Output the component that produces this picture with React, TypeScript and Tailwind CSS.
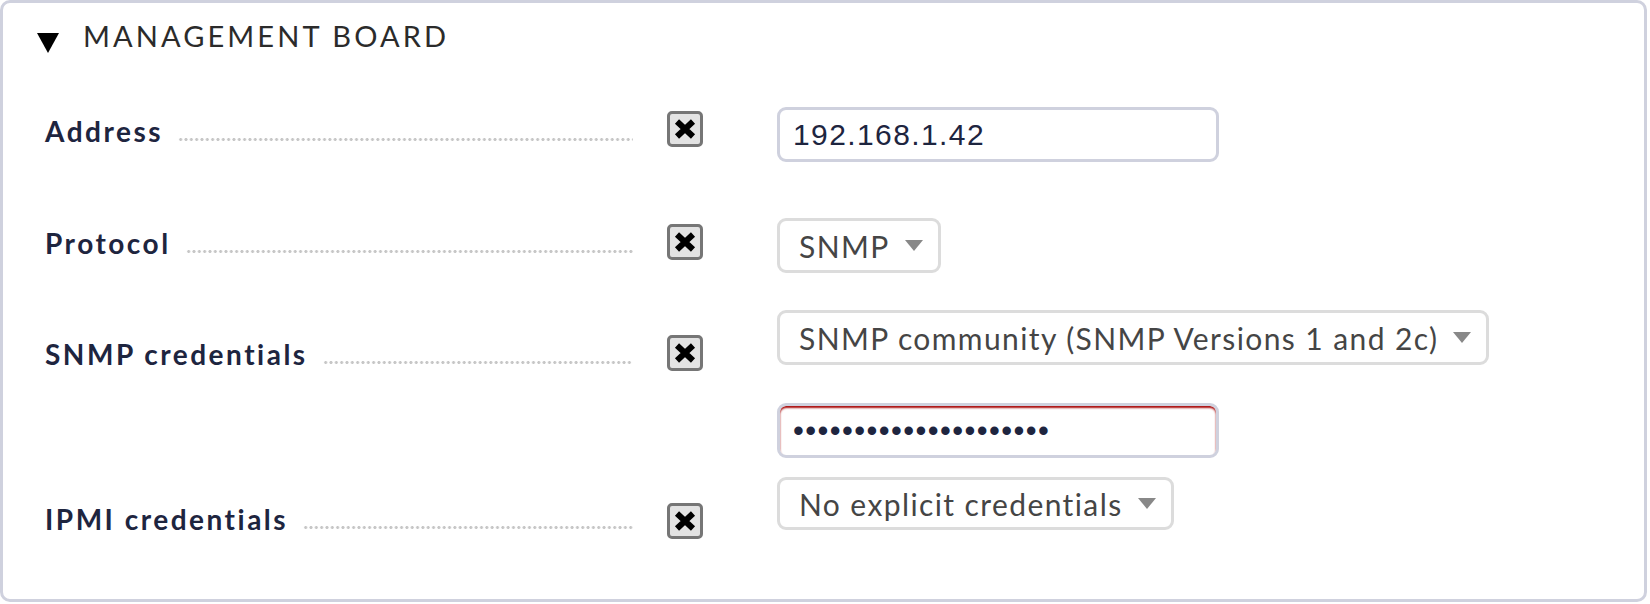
import React from "react";

const lato = "font-['Lato',_'Noto_Sans',_sans-serif]";
const arial = "font-['Liberation_Sans',_Arial,_sans-serif]";

function XBox({ mt }: { mt: string }) {
  return (
    <div
      className={`ml-[34px] flex h-[36px] w-[36px] shrink-0 items-center justify-center rounded-[5px] border-[3px] border-[#767676] bg-[#e3e3e3] ${mt}`}
    >
      <svg width="24" height="22" viewBox="0 0 24 22">
        <path d="M4 3.5 L20 18.5 M20 3.5 L4 18.5" stroke="#000" strokeWidth="6" strokeLinecap="butt" fill="none" />
      </svg>
    </div>
  );
}

function Label({ text, mt }: { text: string; mt: string }) {
  return (
    <div className={`flex w-[588px] shrink-0 items-start ${mt}`}>
      <span className={`${lato} text-[28px] font-bold leading-[36px] tracking-[2.5px] text-[#1e253f] whitespace-nowrap`}>
        {text}
      </span>
      <div className="ml-[15px] mt-[25px] h-[3px] flex-1 bg-[radial-gradient(circle,#c6c6c6_1.2px,transparent_1.8px)] bg-[length:5.33px_3px] bg-repeat-x" />
    </div>
  );
}

function Select({ text, h = "h-[55px]" }: { text: string; h?: string }) {
  return (
    <div className={`flex ${h} w-fit items-center rounded-[9px] border-[3px] border-[#dcdcdc] bg-white pl-[19px] pr-[15px]`}>
      <span className={`${lato} text-[30px] leading-none tracking-[1.4px] text-[#454545] whitespace-nowrap`}>{text}</span>
      <svg className="ml-[15px]" width="18" height="11" viewBox="0 0 18 11">
        <path d="M0 0 H18 L9 11 Z" fill="#888" />
      </svg>
    </div>
  );
}

function TextInput({ text, invalid }: { text: string; invalid?: boolean }) {
  return (
    <div
      className={`flex h-[55px] w-[442px] items-center rounded-[9px] border-[3px] border-[#cfd1de] bg-white pl-[13px] ${
        invalid ? "shadow-[inset_0_2px_2px_rgba(165,0,0,0.95)]" : ""
      }`}
    >
      <span
        className={`${arial} ${invalid ? "text-[31px] tracking-[1.4px]" : "text-[30px] tracking-[1.4px]"} leading-none text-[#1e253f] whitespace-nowrap`}
      >
        {text}
      </span>
    </div>
  );
}

export default function App() {
  return (
    <div className="h-[604px] w-[1650px] bg-white">
      <div className="h-[602px] w-[1647px] rounded-[10px] border-[3px] border-[#cfd1de] bg-white">
        {/* Heading */}
        <div className="flex items-start pl-[34px] pt-[15px]">
          <svg className="mt-[15px]" width="22" height="20" viewBox="0 0 22 20">
            <path d="M0 0 H22 L11 20 Z" fill="#000" />
          </svg>
          <span className={`${lato} ml-[24px] text-[29px] leading-[36px] tracking-[3.1px] text-[#2b2b2b] whitespace-nowrap`}>
            MANAGEMENT BOARD
          </span>
        </div>

        {/* Row 1 */}
        <div className="mt-[53px] flex items-start pl-[42px]">
          <Label text="Address" mt="mt-[6px]" />
          <XBox mt="mt-[4px]" />
          <div className="ml-[74px]">
            <TextInput text="192.168.1.42" />
          </div>
        </div>

        {/* Row 2 */}
        <div className="mt-[56px] flex items-start pl-[42px]">
          <Label text="Protocol" mt="mt-[7px]" />
          <XBox mt="mt-[6px]" />
          <div className="ml-[74px]">
            <Select text="SNMP" />
          </div>
        </div>

        {/* Row 3 */}
        <div className="mt-[37px] flex items-start pl-[42px]">
          <Label text="SNMP credentials" mt="mt-[26px]" />
          <XBox mt="mt-[25px]" />
          <div className="ml-[74px] flex flex-col gap-[38px]">
            <Select text="SNMP community (SNMP Versions 1 and 2c)" />
            <TextInput text={"•".repeat(21)} invalid />
          </div>
        </div>

        {/* Row 4 */}
        <div className="mt-[19px] flex items-start pl-[42px]">
          <Label text="IPMI credentials" mt="mt-[24px]" />
          <XBox mt="mt-[26px]" />
          <div className="ml-[74px]">
            <Select text="No explicit credentials" h="h-[53px]" />
          </div>
        </div>
      </div>
    </div>
  );
}
